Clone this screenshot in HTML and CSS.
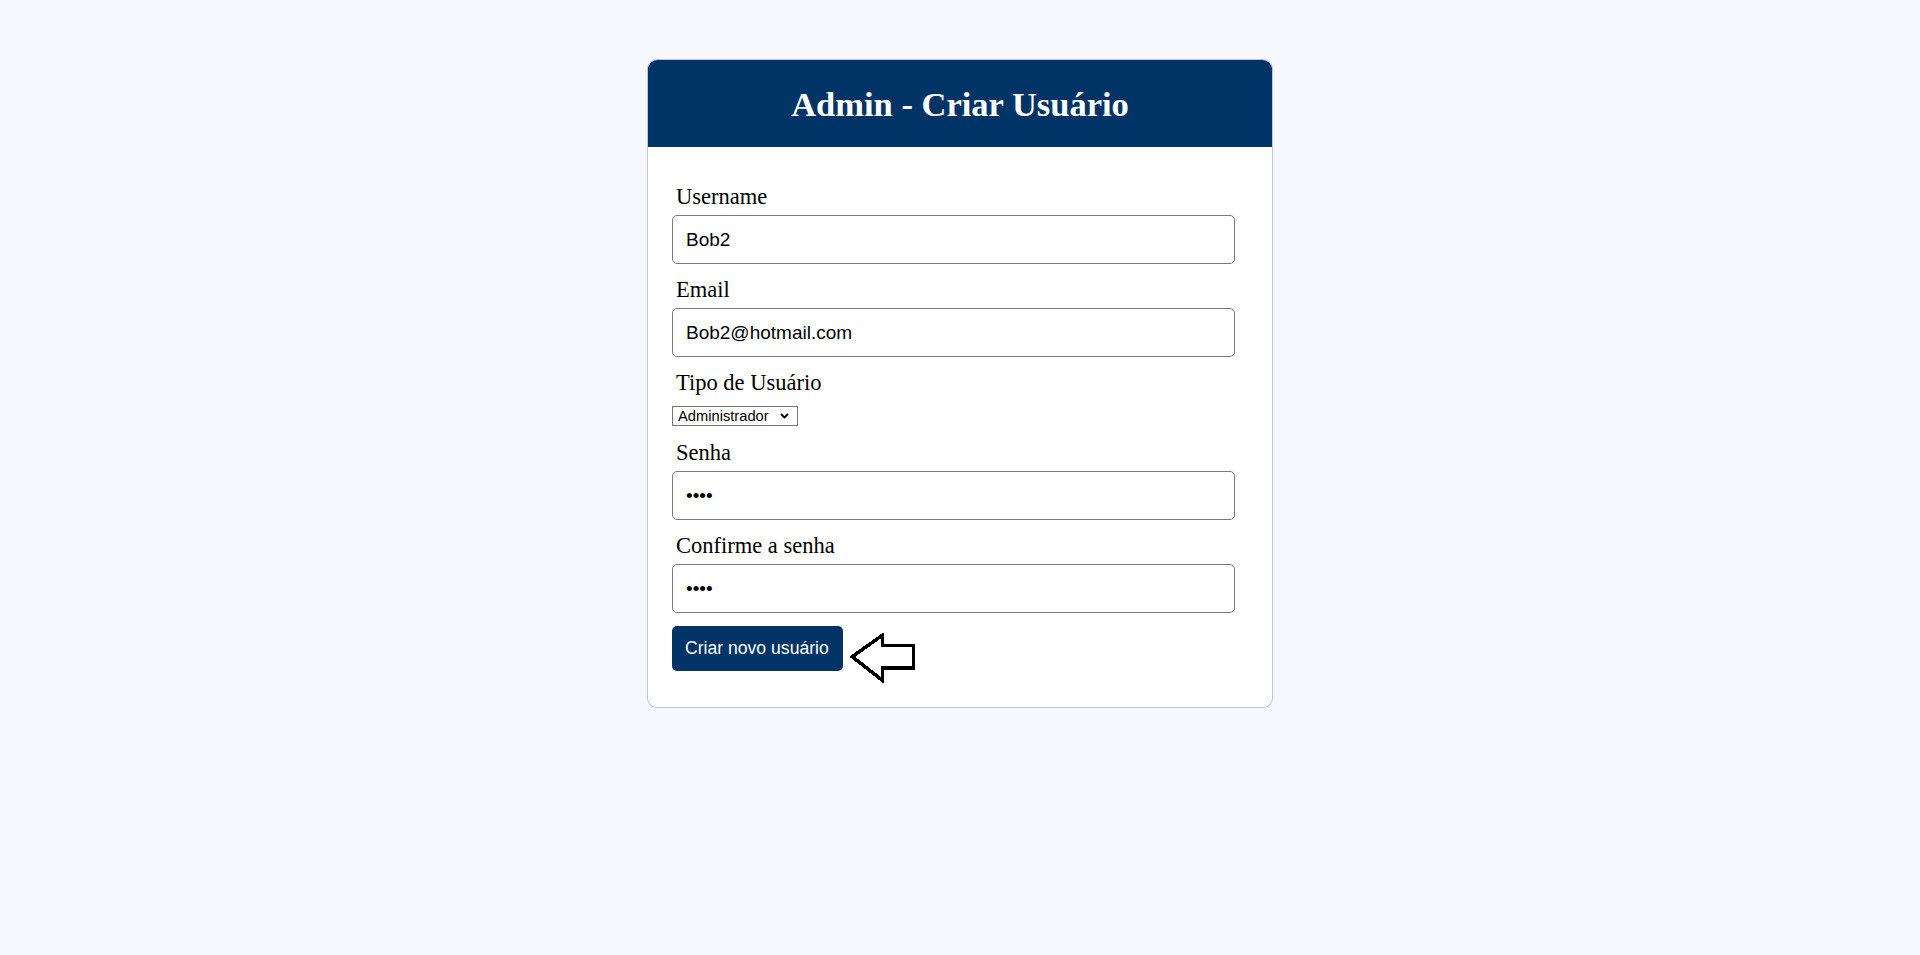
FILE: index.html
```html
<!DOCTYPE html>
<html lang="pt-BR">
<head>
<meta charset="utf-8">
<title>Admin - Criar Usuário</title>
<link rel="stylesheet" href="styles.css">
</head>
<body>
  <div class="card">
    <div class="card-header">
      <h1 class="title">Admin - Criar Usuário</h1>
    </div>
    <form class="card-body">
      <div class="field">
        <label class="label" for="username">Username</label>
        <input class="input" id="username" type="text" value="Bob2">
      </div>
      <div class="field">
        <label class="label" for="email">Email</label>
        <input class="input" id="email" type="email" value="Bob2@hotmail.com">
      </div>
      <div class="field field-select">
        <label class="label label-select" for="tipo">Tipo de Usuário</label>
        <span class="select-wrap">
          <select class="select" id="tipo">
            <option>Administrador</option>
            <option>Usuário</option>
          </select>
          <svg class="chevron" width="9" height="6" viewBox="0 0 9 6"><path d="M1 1 L4.5 4.5 L8 1" fill="none" stroke="#000" stroke-width="1.8"/></svg>
        </span>
      </div>
      <div class="field">
        <label class="label" for="senha">Senha</label>
        <input class="input" id="senha" type="password" value="1234">
      </div>
      <div class="field">
        <label class="label" for="confirma">Confirme a senha</label>
        <input class="input" id="confirma" type="password" value="1234">
      </div>
      <div class="actions">
        <button class="btn" type="button">Criar novo usuário</button>
        <svg class="arrow" width="66" height="50" viewBox="0 0 66 50"><path d="M2.3 23.7 L32.3 2.3 L32.3 12.3 L63.3 12.3 L63.3 34.7 L32.3 34.7 L32.3 47.3 Z" fill="#fff" stroke="#000" stroke-width="3.6" stroke-linejoin="miter"/></svg>
      </div>
    </form>
  </div>
</body>
</html>
```

FILE: styles.css
```css
html, body {
  margin: 0;
  padding: 0;
}

body {
  background: #f6f8fd;
  font-family: "Liberation Serif", "Times New Roman", serif;
  color: #000;
}

.card {
  box-sizing: border-box;
  width: 626px;
  margin: 59px auto 0;
  background: #fff;
  border: 1px solid #bac7db;
  border-radius: 10px;
}

.card-header {
  height: 87px;
  background: #003366;
  border-radius: 9px 9px 0 0;
  display: flex;
  align-items: center;
  justify-content: center;
}

.title {
  margin: 0;
  color: #fff;
  font-family: "Liberation Serif", "Times New Roman", serif;
  font-weight: bold;
  font-size: 34.5px;
  line-height: 38px;
}

.card-body {
  padding: 37px 24px 36px 24px;
  display: flex;
  flex-direction: column;
}

.field {
  display: flex;
  flex-direction: column;
  align-items: flex-start;
  margin-bottom: 13px;
}

.field-select {
  margin-bottom: 14px;
}

.label {
  display: block;
  font-size: 22.5px;
  line-height: 25px;
  padding-left: 4px;
  margin-bottom: 6px;
}

.label-select {
  margin-bottom: 11px;
}

.input {
  box-sizing: border-box;
  width: 563px;
  height: 49px;
  padding: 0 13px;
  border: 1px solid #7a7a7a;
  border-radius: 5px;
  font-family: "Liberation Sans", Arial, sans-serif;
  font-size: 19px;
  color: #000;
  background: #fff;
  outline: none;
}

.select-wrap {
  position: relative;
  display: inline-block;
  line-height: 0;
}

.select {
  box-sizing: border-box;
  width: 126px;
  height: 20px;
  padding: 0 0 0 5px;
  margin: 0;
  border: 1px solid #767676;
  border-radius: 0;
  background: #fff;
  font-family: "Liberation Sans", Arial, sans-serif;
  font-size: 14.7px;
  line-height: 18px;
  color: #000;
  appearance: none;
  -webkit-appearance: none;
}

.chevron {
  position: absolute;
  right: 9px;
  top: 7px;
  pointer-events: none;
}

.actions {
  display: flex;
  align-items: flex-start;
  gap: 7px;
  height: 45px;
}

.btn {
  box-sizing: border-box;
  width: 171px;
  height: 45px;
  padding: 0 13px;
  border: none;
  border-radius: 5px;
  background: #003366;
  color: #fff;
  font-family: "Liberation Sans", Arial, sans-serif;
  font-size: 17.6px;
  text-align: left;
  white-space: nowrap;
}

.arrow {
  flex: none;
  margin-top: 7px;
  shape-rendering: crispEdges;
}
```
